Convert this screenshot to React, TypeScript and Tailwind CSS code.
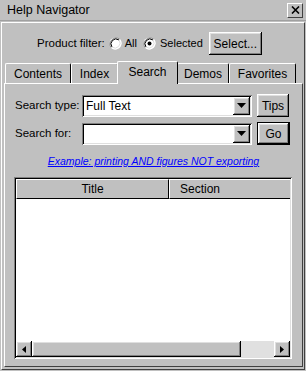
import React from "react";

const raised =
  "shadow-[inset_-1px_-1px_#000,inset_1px_1px_#fff,inset_-2px_-2px_#808080,inset_2px_2px_#dfdfdf]";
const sunken =
  "shadow-[inset_1px_1px_#808080,inset_-1px_-1px_#fff,inset_2px_2px_#000,inset_-2px_-2px_#dfdfdf]";

function Radio({ checked }: { checked?: boolean }) {
  return (
    <svg width="13" height="13" viewBox="0 0 13 13" className="shrink-0">
      <circle cx="6.5" cy="6.5" r="6" fill="#fff" />
      <path d="M2.3 10.7 A6 6 0 0 1 10.7 2.3" fill="none" stroke="#808080" strokeWidth="1" />
      <path d="M3 10 A5 5 0 0 1 10 3" fill="none" stroke="#000" strokeWidth="1" />
      <path d="M10.7 2.3 A6 6 0 0 1 2.3 10.7" fill="none" stroke="#fff" strokeWidth="1" />
      <path d="M10 3 A5 5 0 0 1 3 10" fill="none" stroke="#dfdfdf" strokeWidth="1" />
      {checked && <circle cx="6.5" cy="6.5" r="2" fill="#000" />}
    </svg>
  );
}

function Combo({ value }: { value?: string }) {
  return (
    <div className={`w-[170px] h-[22px] bg-white ${sunken} flex items-center p-[2px]`}>
      <span className="flex-1 pl-[2px] text-[12px] leading-none">{value}</span>
      <div className={`w-[17px] h-[18px] bg-[#c0c0c0] ${raised} flex items-center justify-center`}>
        <svg width="9" height="5" viewBox="0 0 9 5">
          <path d="M0 0 H9 L4.5 5 Z" fill="#000" />
        </svg>
      </div>
    </div>
  );
}

function Tab({ label, w, selected }: { label: string; w: string; selected?: boolean }) {
  return (
    <div
      className={`${w} ${
        selected ? "h-[23px] relative z-10 -mb-[1px] -mx-[1px] bg-[#c0c0c0]" : "h-[20px]"
      } rounded-t-[2px] border-t border-l border-r border-t-white border-l-white border-r-black flex items-center justify-center text-[12px] leading-none`}
    >
      <span className={selected ? "-mt-[2px]" : ""}>{label}</span>
    </div>
  );
}

export default function App() {
  return (
    <div className="w-[306px] h-[371px] bg-[#c0c0c0] font-['Liberation_Sans',Arial,sans-serif] text-black text-[12px] flex flex-col overflow-hidden">
      <div className="h-[20px] shrink-0 flex items-center justify-between pl-[7px] pr-[3px]">
        <span className="text-[12.5px] leading-none">Help Navigator</span>
        <div className="w-[16px] h-[15px] border border-t-white border-l-white border-r-[#404040] border-b-[#404040] flex items-center justify-center">
          <svg width="9" height="8" viewBox="0 0 9 8">
            <path d="M1 0.5 L8 7.5 M8 0.5 L1 7.5" stroke="#000" strokeWidth="1.6" />
          </svg>
        </div>
      </div>
      <div className="h-px shrink-0 bg-[#a0a0a0]" />
      <div className="flex-1 mx-[1px] mt-[1px] mb-[1px] border border-t-white border-l-white border-r-[#404040] border-b-[#404040] flex flex-col min-h-0">
        <div className="pt-[6px] pl-[35px] flex items-center h-[29px] box-content shrink-0">
          <span className="text-[11.5px]">Product filter:</span>
          <span className="ml-[4px]"><Radio /></span>
          <span className="ml-[3px] text-[11px]">All</span>
          <span className="ml-[6px]"><Radio checked /></span>
          <span className="ml-[4px] text-[11px]">Selected</span>
          <button className={`ml-[6px] w-[53px] h-[23px] ${raised} bg-[#c0c0c0] text-[12px] leading-none`}>
            Select...
          </button>
        </div>
        <div className="flex items-end pl-[3px] mt-[3px] h-[22px] shrink-0">
          <Tab label="Contents" w="w-[66px]" />
          <Tab label="Index" w="w-[47px]" />
          <Tab label="Search" w="w-[61px]" selected />
          <Tab label="Demos" w="w-[52px]" />
          <Tab label="Favorites" w="w-[67px]" />
        </div>
        <div className="flex-1 ml-[2px] mr-[1px] mb-[2px] border border-t-white border-l-white border-r-[#404040] border-b-[#404040] flex flex-col min-h-0">
          <div className="pt-[10px] pl-[10px] flex items-center">
            <span className="w-[67px] whitespace-nowrap text-[11.5px]">Search type:</span>
            <Combo value="Full Text" />
            <button className={`ml-[5px] w-[32px] h-[23px] ${raised} bg-[#c0c0c0] text-[12px] leading-none`}>
              Tips
            </button>
          </div>
          <div className="mt-[5px] pl-[10px] flex items-center">
            <span className="w-[67px] whitespace-nowrap text-[11.5px]">Search for:</span>
            <Combo />
            <button className={`ml-[5px] w-[33px] h-[23px] border border-black bg-[#c0c0c0] text-[12px] leading-none flex items-center justify-center`}>
              <span className={`w-full h-full flex items-center justify-center ${raised}`}>Go</span>
            </button>
          </div>
          <div className="mt-[10px] text-center leading-[12px] h-[12px]">
            <span className="text-[10.5px] leading-[12px] italic underline text-[#0000ff]">
              Example: printing AND figures NOT exporting
            </span>
          </div>
          <div className={`ml-[9px] mt-[10px] w-[278px] h-[182px] bg-white ${sunken} p-[2px] flex flex-col`}>
            <div className="flex h-[20px] shrink-0">
              <div className="w-[153px] bg-[#c0c0c0] border-t border-l border-t-white border-l-white border-r border-b border-r-black border-b-black flex items-center justify-center leading-none">
                Title
              </div>
              <div className="flex-1 bg-[#c0c0c0] border-t border-l border-t-white border-l-white border-b border-b-black flex items-center pl-[10px] leading-none">
                Section
              </div>
            </div>
            <div className="flex-1 bg-white" />
            <div className="h-[16px] flex shrink-0">
              <div className={`w-[16px] h-[16px] bg-[#c0c0c0] ${raised} flex items-center justify-center`}>
                <svg width="4" height="7" viewBox="0 0 4 7"><path d="M4 0 V7 L0 3.5 Z" fill="#000" /></svg>
              </div>
              <div className={`w-[209px] h-[16px] bg-[#c0c0c0] ${raised}`} />
              <div className="flex-1 bg-[#e0e0e0]" />
              <div className={`w-[16px] h-[16px] bg-[#c0c0c0] ${raised} flex items-center justify-center`}>
                <svg width="4" height="7" viewBox="0 0 4 7"><path d="M0 0 V7 L4 3.5 Z" fill="#000" /></svg>
              </div>
            </div>
          </div>
        </div>
      </div>
    </div>
  );
}
